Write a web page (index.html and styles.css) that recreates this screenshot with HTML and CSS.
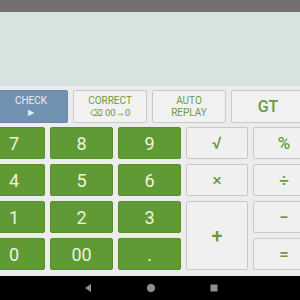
FILE: index.html
```html
<!DOCTYPE html>
<html>
<head>
<meta charset="utf-8">
<link rel="stylesheet" href="styles.css">
</head>
<body>
<div class="app">
  <div class="status"></div>
  <div class="display"></div>
  <div class="pad">
    <div class="funcs">
      <div class="fbtn check"><span>CHECK</span><span class="small">▶</span></div>
      <div class="fbtn"><span>CORRECT</span><span class="sub"><span class="bk">⌫</span> 00→0</span></div>
      <div class="fbtn"><span>AUTO</span><span>REPLAY</span></div>
      <div class="fbtn gt">GT</div>
    </div>
    <div class="keys">
      <div class="k g">7</div><div class="k g">8</div><div class="k g">9</div><div class="k o">√</div><div class="k o">%</div>
      <div class="k g">4</div><div class="k g">5</div><div class="k g">6</div><div class="k o">×</div><div class="k o">÷</div>
      <div class="k g">1</div><div class="k g">2</div><div class="k g">3</div><div class="k o plus">+</div><div class="k o">−</div>
      <div class="k g">0</div><div class="k g">00</div><div class="k g">.</div><div class="k o">=</div>
    </div>
  </div>
  <div class="nav">
    <svg width="10" height="10" viewBox="0 0 10 10"><path d="M8 1 L2 5 L8 9 Z" fill="#8e8e8e"/></svg>
    <svg width="10" height="10" viewBox="0 0 10 10"><circle cx="5" cy="5" r="4" fill="#8e8e8e"/></svg>
    <svg width="10" height="10" viewBox="0 0 10 10"><rect x="1.5" y="1.5" width="7" height="7" fill="#8e8e8e"/></svg>
  </div>
</div>
</body>
</html>
```
FILE: styles.css
```css
html, body { margin: 0; padding: 0; }
body {
  width: 300px; height: 300px; overflow: hidden;
  background: #eeeeee;
  font-family: Roboto, "Liberation Sans", sans-serif;
}
.app { display: flex; flex-direction: column; height: 300px; }
.status { height: 12px; background: #717070; }
.display { height: 74px; background: #d6e3e0; }
.pad { padding-top: 4px; background: #ececec; flex: 1; overflow: hidden; }
.funcs {
  display: grid;
  grid-template-columns: 74px 74px 74px 74px;
  column-gap: 5px;
  margin-left: -6px;
  width: 320px;
  height: 33px;
}
.fbtn {
  box-sizing: border-box;
  background: #f1f1f1;
  border: 1px solid #c9c9c9;
  border-radius: 2px;
  color: #6f9a3e;
  font-size: 10px;
  line-height: 12px;
  display: flex; flex-direction: column; align-items: center; justify-content: center;
}
.fbtn .sub { font-size: 9.5px; }
.fbtn .bk { font-size: 9px; }
.fbtn.check { background: #7191b0; border-color: #6a88a6; color: #e8eef6; }
.fbtn.check .small { font-size: 8px; }
.fbtn.gt { font-size: 16px; font-weight: 500; color: #6c9a3a; }
.keys {
  margin-top: 4px;
  margin-left: -17px;
  width: 340px;
  display: grid;
  grid-template-columns: 62px 63px 63px 62px 62px;
  grid-auto-rows: 32px;
  column-gap: 5px;
  row-gap: 5px;
}
.k {
  box-sizing: border-box;
  border-radius: 2px;
  display: flex; align-items: center; justify-content: center;
}
.k.g {
  background: #5f9a34;
  border: 1px solid #578f2f;
  color: #eef4dd;
  font-size: 18px;
}
.k.o {
  background: #f0f0f0;
  border: 1px solid #c8c8c8;
  color: #6a9a3a;
  font-size: 17px;
  font-weight: 500;
}
.k.plus { grid-row: span 2; font-size: 20px; }
.nav {
  height: 24px;
  background: #000;
  display: flex; align-items: center; justify-content: center;
  gap: 53px;
  padding-left: 2px;
}
```
